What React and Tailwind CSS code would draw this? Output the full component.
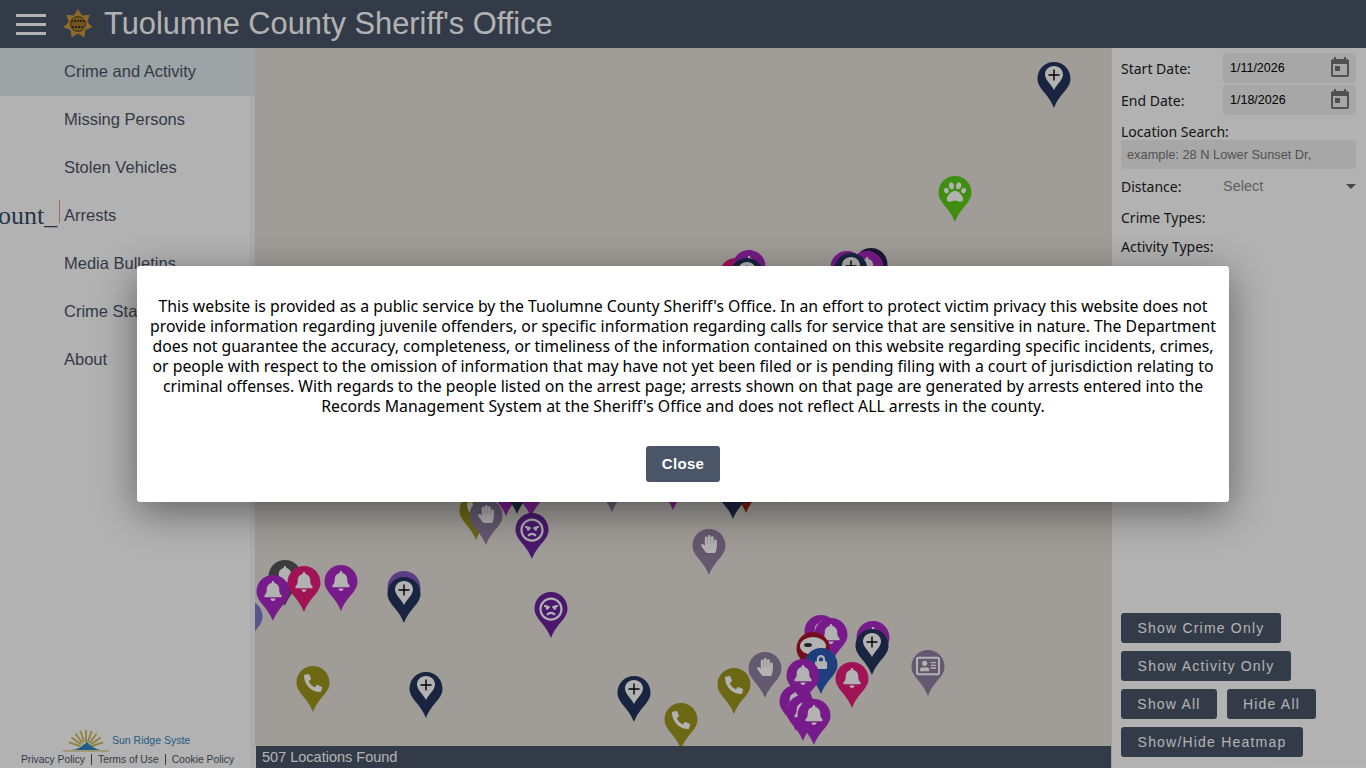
import React from 'react';
import { FaBell, FaHandPaper, FaPhoneAlt, FaPaw, FaRegAngry, FaRegAddressCard, FaLock } from 'react-icons/fa';

const NAV = ['Crime and Activity', 'Missing Persons', 'Stolen Vehicles', 'Arrests', 'Media Bulletins', 'Crime Statistics', 'About'];

const PURPLE = '#ad27c6';
const NAVY = '#25345c';
const CRIMSON = '#e51e7c';
const OLIVE = '#9c951d';
const GREY = '#8e80a0';
const DARK = '#6b259d';

// page coordinates of the pin: centre x, top y
const PINS = [
  { x: 1053, y: 62, color: NAVY, icon: 'plus' },
  { x: 954, y: 176, color: '#5bcc18', icon: 'paw' },
  { x: 735, y: 258, color: CRIMSON, icon: 'bell' },
  { x: 748, y: 250, color: PURPLE, icon: 'bell' },
  { x: 746, y: 258, color: NAVY, icon: 'plus' },
  { x: 870, y: 248, color: '#25204a', icon: 'bell' },
  { x: 866, y: 251, color: PURPLE, icon: 'bell' },
  { x: 846, y: 251, color: PURPLE, icon: 'bell' },
  { x: 850, y: 253, color: NAVY, icon: 'plus' },
  { x: 475, y: 494, color: OLIVE, icon: 'phone' },
  { x: 505, y: 470, color: PURPLE, icon: 'bell' },
  { x: 516, y: 468, color: NAVY, icon: 'plus' },
  { x: 530, y: 471, color: PURPLE, icon: 'bell' },
  { x: 485, y: 499, color: GREY, icon: 'hand' },
  { x: 611, y: 466, color: GREY, icon: 'hand' },
  { x: 672, y: 464, color: PURPLE, icon: 'bell' },
  { x: 745, y: 467, color: '#a8280f', icon: 'bell' },
  { x: 732, y: 473, color: NAVY, icon: 'plus' },
  { x: 785, y: 457, color: '#222222', icon: 'plus' },
  { x: 531, y: 513, color: DARK, icon: 'angry' },
  { x: 708, y: 529, color: GREY, icon: 'hand' },
  { x: 284, y: 560, color: '#555555', icon: 'bell' },
  { x: 303, y: 566, color: CRIMSON, icon: 'bell' },
  { x: 272, y: 575, color: PURPLE, icon: 'bell' },
  { x: 340, y: 565, color: PURPLE, icon: 'bell' },
  { x: 403, y: 571, color: '#8458c0', icon: 'bell' },
  { x: 403, y: 577, color: NAVY, icon: 'plus' },
  { x: 550, y: 592, color: DARK, icon: 'angry' },
  { x: 245, y: 600, color: '#7d7ac8', icon: 'bell' },
  { x: 312, y: 666, color: OLIVE, icon: 'phone' },
  { x: 425, y: 672, color: NAVY, icon: 'plus' },
  { x: 633, y: 676, color: NAVY, icon: 'plus' },
  { x: 680, y: 703, color: OLIVE, icon: 'phone' },
  { x: 733, y: 668, color: OLIVE, icon: 'phone' },
  { x: 764, y: 652, color: GREY, icon: 'hand' },
  { x: 820, y: 615, color: PURPLE, icon: 'bell' },
  { x: 830, y: 618, color: PURPLE, icon: 'bell' },
  { x: 872, y: 621, color: PURPLE, icon: 'bell' },
  { x: 871, y: 629, color: NAVY, icon: 'plus' },
  { x: 812, y: 632, color: '#a8142a', icon: 'mask' },
  { x: 820, y: 648, color: '#2c5ab7', icon: 'lock' },
  { x: 795, y: 685, color: PURPLE, icon: 'bell' },
  { x: 802, y: 695, color: PURPLE, icon: 'bell' },
  { x: 802, y: 659, color: PURPLE, icon: 'bell' },
  { x: 813, y: 699, color: PURPLE, icon: 'bell' },
  { x: 851, y: 662, color: CRIMSON, icon: 'bell' },
  { x: 927, y: 650, color: GREY, icon: 'card' },
];

function PinGlyph({ icon }) {
  switch (icon) {
    case 'plus':
      return (
        <>
          <path d="M17 4c-5.200 0-9 3.900-9 8.600 0 5 5.500 9 9 15.400 3.500-6.400 9-10.400 9-15.400C26 7.900 22.200 4 17 4z" fill="#fff" />
          <path d="M17 7.500v11M11.500 13h11" stroke="#000" strokeWidth="1.400" fill="none" />
        </>
      );
    case 'paw':
      return <FaPaw x={6} y={5} size={22} color="#fff" />;
    case 'hand':
      return <FaHandPaper x={8} y={6} size={18} color="#fff" />;
    case 'phone':
      return <FaPhoneAlt x={8} y={8} size={18} color="#fff" />;
    case 'angry':
      return <FaRegAngry x={5} y={5} size={24} color="#fff" />;
    case 'card':
      return <FaRegAddressCard x={5} y={4} size={24} color="#fff" />;
    case 'lock':
      return <FaLock x={10} y={7} size={14} color="#fff" />;
    case 'mask':
      return (
        <>
          <ellipse cx="17" cy="14" rx="13" ry="9" fill="#fff" />
          <ellipse cx="12" cy="13" rx="4" ry="2" fill="#333" />
        </>
      );
    default:
      return <FaBell x={7} y={6} size={20} color="#fff" />;
  }
}

function Pin({ pin }) {
  return (
    <svg
      className="absolute"
      style={{ left: pin.x - 271, top: pin.y - 48 }}
      width="34"
      height="46"
      viewBox="0 0 34 46"
    >
      <path
        d="M17 0C7.800 0 .5 7.400.5 16.500c0 10.500 11 15 16.500 29.500 5.500-14.500 16.500-19 16.500-29.500C33.500 7.400 26.200 0 17 0z"
        fill={pin.color}
      />
      <PinGlyph icon={pin.icon} />
    </svg>
  );
}

function Badge() {
  const spikes = [];
  for (let i = 0; i < 7; i++) {
    const a = ((i * 360) / 7 - 90) * (Math.PI / 180);
    const b = a + Math.PI / 7;
    spikes.push(`${15 + 15 * Math.cos(a)},${15 + 15 * Math.sin(a)}`);
    spikes.push(`${15 + 9.500 * Math.cos(b)},${15 + 9.500 * Math.sin(b)}`);
  }
  return (
    <svg width="30" height="30" viewBox="0 0 30 30" className="shrink-0">
      <polygon points={spikes.join(' ')} fill="#c9983f" />
      <circle cx="15" cy="15" r="7.500" fill="#a87a2c" stroke="#5c4a24" strokeWidth="1" />
      <path d="M8 12h14M9 18h12" stroke="#3d3520" strokeWidth="2" strokeDasharray="2 1" />
    </svg>
  );
}

function SunLogo() {
  const rays = [-72, -54, -36, -18, 0, 18, 36, 54, 72];
  return (
    <svg width="46" height="24" viewBox="0 0 46 24" className="shrink-0">
      {rays.map((r) => (
        <path key={r} d="M23 20L23 2" stroke="#cdbb5c" strokeWidth="1.800" strokeDasharray="0 6 12" transform={`rotate(${r} 23 20)`} />
      ))}
      <path d="M8 22c6 0 10-3 16-8 3 3 7 7 14 8z" fill="#2f86bd" />
      <path d="M0 23h46" stroke="#cdbb5c" strokeWidth="1" />
    </svg>
  );
}

function CalendarIcon() {
  return (
    <svg width="24" height="24" viewBox="0 0 24 24" fill="currentColor" className="text-[#757575]">
      <path d="M19 3h-1V1h-2v2H8V1H6v2H5c-1.110 0-1.990.900-1.990 2L3 19c0 1.100.890 2 2 2h14c1.100 0 2-.900 2-2V5c0-1.100-.900-2-2-2zm0 16H5V8h14v11zM7 10h5v5H7z" />
    </svg>
  );
}

function DateRow({ label, value }) {
  return (
    <div className="flex items-center h-[30px] mb-[2px]">
      <label className="w-[102px] text-[14px] text-[#222]">{label}</label>
      <div className="flex items-center justify-between w-[133px] h-[30px] bg-[#f0f0f0] rounded-sm pl-[7px] pr-[4px]">
        <span className="font-['Liberation_Sans'] text-[12.5px] text-black">{value}</span>
        <CalendarIcon />
      </div>
    </div>
  );
}

function PanelButton({ children, width }) {
  return (
    <button className={`${width} h-[30px] rounded-[3px] bg-[#4a5568] text-white font-['Liberation_Sans'] text-[14px] tracking-[1.2px] text-center`}>
      {children}
    </button>
  );
}

export default function App() {
  return (
    <div className="relative h-screen w-full overflow-hidden flex flex-col bg-white font-['Noto_Sans',sans-serif]">
      <header className="h-12 shrink-0 flex items-center bg-[#4a5568] pl-4">
        <div className="w-[30px] flex flex-col gap-[6px]">
          <span className="h-[3px] bg-white" />
          <span className="h-[3px] bg-white" />
          <span className="h-[3px] bg-white" />
        </div>
        <div className="ml-[17px]">
          <Badge />
        </div>
        <h1 className="ml-[11px] font-['Liberation_Sans'] text-[30.8px] text-white">Tuolumne County Sheriff's Office</h1>
      </header>

      <div className="flex-1 flex min-h-0">
        <aside className="w-[255px] shrink-0 flex flex-col justify-between shadow-[inset_-5px_0_0_#f7f7f7] font-['Liberation_Sans']">
          <nav className="flex flex-col">
            {NAV.map((item, i) => (
              <a key={item} className={`relative h-12 flex items-center pl-16 pb-[2px] text-[16.5px] text-[#4a5568] ${i === 0 ? 'bg-[#e2eaed]' : ''}`}>
                {item === 'Arrests' && (
                  <>
                    <span className="absolute left-[-2px] top-[9px] font-['Liberation_Serif'] text-[26px] leading-[30px] text-[#3a4a6a] whitespace-nowrap">
                      ount_
                    </span>
                    <span className="absolute left-[59px] top-[8px] h-[23px] w-px bg-[#d8a090]" />
                  </>
                )}
                {item}
              </a>
            ))}
          </nav>
          <div className="flex flex-col items-center pb-[2px]">
            <div className="flex items-end gap-[3px] h-[24px] w-[127px] -ml-[2px]">
              <SunLogo />
              <span className="w-[80px] overflow-hidden whitespace-nowrap text-[10.5px] leading-[16px] text-[#2f86bd] mb-[4px] font-['Liberation_Sans']">Sun Ridge Systems</span>
            </div>
            <div className="flex items-center text-[10.3px] leading-[13px] mt-[1px] text-[#4a5568]">
              <span>Privacy Policy</span>
              <span className="mx-[6px] h-[11px] border-l border-[#555]" />
              <span>Terms of Use</span>
              <span className="mx-[6px] h-[11px] border-l border-[#555]" />
              <span>Cookie Policy</span>
            </div>
          </div>
        </aside>

        <main className="flex-1 min-w-0 flex flex-col">
          <div className="relative flex-1 overflow-hidden bg-[#e5e1dc]">
            {PINS.map((pin, i) => (
              <Pin key={i} pin={pin} />
            ))}
          </div>
          <div className="h-[22px] ml-px shrink-0 flex items-center bg-[#4a5568] pl-[6px] pt-px font-['Liberation_Sans'] text-[14.5px] text-white">
            507 Locations Found
          </div>
        </main>

        <section className="w-[255px] shrink-0 flex flex-col justify-between border-l border-[#e4e4e4] pl-[9px] pr-[10px] pt-[5px] pb-[11px]">
          <div>
            <DateRow label="Start Date:" value="1/11/2026" />
            <DateRow label="End Date:" value="1/18/2026" />
            <label className="block mt-[8px] -mb-px text-[14px] leading-[18px] text-[#222]">Location Search:</label>
            <div className="h-[29px] flex items-center bg-[#f0f0f0] rounded-sm pl-[6px] font-['Liberation_Sans'] text-[12.8px] text-[#757575]">
              example: 28 N Lower Sunset Dr,
            </div>
            <div className="relative flex items-center h-[18px] mt-[8px]">
              <label className="w-[102px] text-[14px] text-[#222]">Distance:</label>
              <span className="pt-px font-['Liberation_Sans'] text-[14.5px] text-[#8a8a8a]">Select</span>
              <span className="absolute right-0 top-[7px] border-x-[5px] border-t-[5px] border-x-transparent border-t-[#666]" />
            </div>
            <label className="block mt-[14px] text-[14px] leading-[18px] text-[#222]">Crime Types:</label>
            <label className="block mt-[11px] text-[14px] leading-[18px] text-[#222]">Activity Types:</label>
          </div>
          <div className="flex flex-col items-start gap-2">
            <PanelButton width="w-[160px]">Show Crime Only</PanelButton>
            <PanelButton width="w-[170px]">Show Activity Only</PanelButton>
            <div className="flex gap-[10px]">
              <PanelButton width="w-[96px]">Show All</PanelButton>
              <PanelButton width="w-[89px]">Hide All</PanelButton>
            </div>
            <PanelButton width="w-[182px]">Show/Hide Heatmap</PanelButton>
          </div>
        </section>
      </div>

      <div className="absolute inset-0 flex items-center justify-center bg-black/30">
        <div className="w-[1092px] h-[236px] rounded-[3px] bg-white shadow-[0_10px_40px_rgba(0,0,0,0.45)] flex flex-col items-center pt-[30px] px-[14px]">
          <p className="text-[15.8px] leading-[20px] text-center text-black whitespace-nowrap">
            This website is provided as a public service by the Tuolumne County Sheriff's Office. In an effort to protect victim privacy this website does not<br />
            provide information regarding juvenile offenders, or specific information regarding calls for service that are sensitive in nature. The Department<br />
            does not guarantee the accuracy, completeness, or timeliness of the information contained on this website regarding specific incidents, crimes,<br />
            or people with respect to the omission of information that may have not yet been filed or is pending filing with a court of jurisdiction relating to<br />
            criminal offenses. With regards to the people listed on the arrest page; arrests shown on that page are generated by arrests entered into the<br />
            Records Management System at the Sheriff's Office and does not reflect ALL arrests in the county.
          </p>
          <button className="mt-[30px] w-[74px] h-9 rounded-[3px] bg-[#4a5568] text-white font-['Liberation_Sans'] text-[15px] font-bold tracking-[0.3px]">
            Close
          </button>
        </div>
      </div>
    </div>
  );
}
